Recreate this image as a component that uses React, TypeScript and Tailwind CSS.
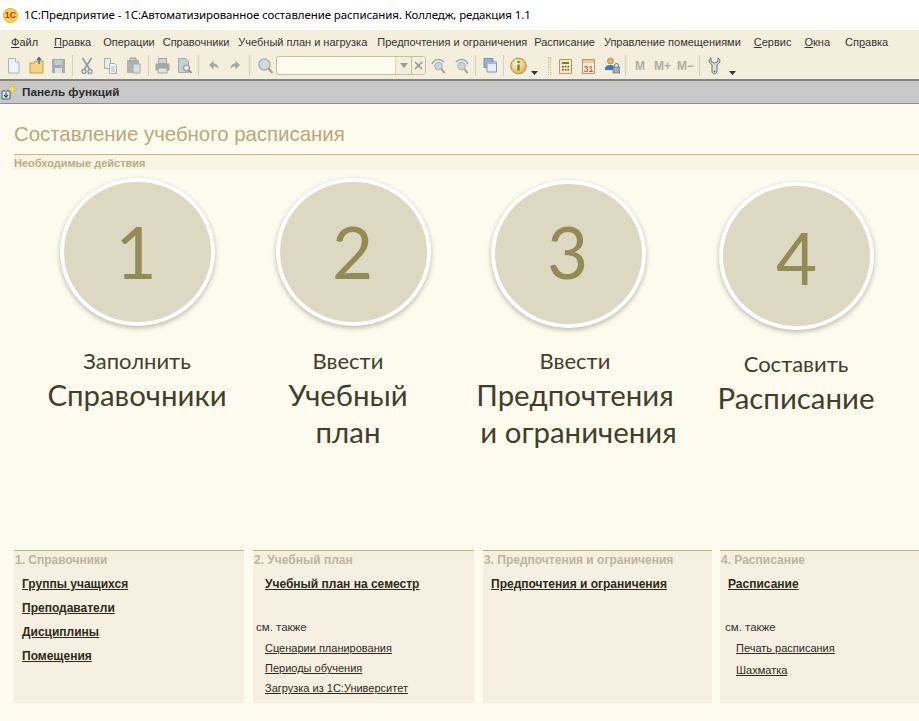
import { FC, ReactNode } from "react";

const Sep: FC<{ className?: string }> = ({ className = "" }) => (
  <div className={`w-px h-[21px] bg-[#d5cfb4] ${className}`} />
);

const Arrow: FC<{ className?: string }> = ({ className = "" }) => (
  <svg width="8" height="4" viewBox="0 0 8 4" className={`self-end mb-[2px] ${className}`}>
    <path d="M0 0h7L3.5 4z" fill="#333" />
  </svg>
);

const Ico: FC<{ w: number; h?: number; className?: string; children: ReactNode }> = ({
  w,
  h = 18,
  className = "",
  children,
}) => (
  <svg width={w} height={h} viewBox={`0 0 ${w} ${h}`} className={`shrink-0 ${className}`}>
    {children}
  </svg>
);

const Toolbar = () => (
  <div className="flex items-center h-[23px] pl-[7px]">
    {/* new */}
    <Ico w={13} className="ml-[0px]">
      <path d="M1.5 1.5h7l3.5 3.5v11h-10.5z" fill="#eef3fa" stroke="#a9b4c4" />
      <path d="M8.5 1.5v3.5h3.5" fill="#fff" stroke="#a9b4c4" />
    </Ico>
    {/* open */}
    <Ico w={16} className="ml-[9px]">
      <path d="M1 6h4l1-2h8v12H1z" fill="#f2d57d" stroke="#c2a04a" />
      <path d="M10 7V1M8 3l2-2.500L12 3" fill="none" stroke="#3f6f9c" strokeWidth="1.4" />
    </Ico>
    {/* save */}
    <Ico w={15} className="ml-[6px]">
      <path d="M1 2h13v14H1z" fill="#a4acae" />
      <path d="M3.5 3h8v5h-8z" fill="#c4cacb" />
      <path d="M4 11h7v5H4z" fill="#dfe2e2" />
    </Ico>
    <Sep className="ml-[6px]" />
    {/* cut */}
    <Ico w={12} className="ml-[8px]">
      <path d="M1.5 1l7 11M10.5 1l-7 11" stroke="#8f9aa3" strokeWidth="1.7" />
      <circle cx="3" cy="14.5" r="2" fill="none" stroke="#8f9aa3" strokeWidth="1.4" />
      <circle cx="9" cy="14.5" r="2" fill="none" stroke="#8f9aa3" strokeWidth="1.4" />
    </Ico>
    {/* copy */}
    <Ico w={15} className="ml-[10px]">
      <path d="M1.5 1.5h6v10h-6z" fill="#e9ecef" stroke="#a5adb3" />
      <path d="M6.5 6.5h5l2 2v8h-7z" fill="#f5f6f7" stroke="#a5adb3" />
      <path d="M8 10h4M8 12h4M8 14h4" stroke="#b5bbc0" />
    </Ico>
    {/* paste */}
    <Ico w={15} className="ml-[8px]">
      <path d="M1 3h12v13H1z" fill="#aeb5ad" />
      <path d="M4 1h6v3H4z" fill="#cfcfc6" stroke="#9b9f97" />
      <path d="M7 7h7v9H7z" fill="#d9dfe3" stroke="#a4acb0" />
    </Ico>
    <Sep className="ml-[7px]" />
    {/* print */}
    <Ico w={15} className="ml-[6px]">
      <path d="M3.5 1.5h8v5h-8z" fill="#d3d3ce" stroke="#a3a5a1" />
      <path d="M0.5 6.5h14v7h-14z" fill="#a4a8a6" />
      <path d="M3 11h9v5H3z" fill="#e3e3df" stroke="#a3a5a1" />
    </Ico>
    {/* preview */}
    <Ico w={15} className="ml-[7px]">
      <path d="M1.5 1.5h7l3 3v11h-10z" fill="#c9d0d4" stroke="#a5acb0" />
      <circle cx="9.5" cy="11" r="3" fill="#e6e8e4" stroke="#8f9692" strokeWidth="1.2" />
      <path d="M11.5 13l3 3" stroke="#8f8a68" strokeWidth="1.6" />
    </Ico>
    <Sep className="ml-[6px]" />
    {/* undo */}
    <Ico w={10} className="ml-[10px]">
      <path d="M0 8l4.500-4.500V6.500c3 0 5 2 5 5.500-1-2-2.500-2.500-5-2.500v3z" fill="#9fab9f" />
    </Ico>
    {/* redo */}
    <Ico w={10} className="ml-[11px]">
      <path d="M10 8L5.500 3.500V6.500c-3 0-5 2-5 5.500 1-2 2.500-2.500 5-2.500v3z" fill="#9fab9f" />
    </Ico>
    <Sep className="ml-[9px]" />
    {/* search */}
    <Ico w={15} className="ml-[8px]">
      <circle cx="6.500" cy="7.500" r="5.500" fill="#d3d8dc" stroke="#a8aeb3" strokeWidth="1.400" />
      <path d="M10.500 11.500l4 4.500" stroke="#a69f80" strokeWidth="2.200" />
    </Ico>
    {/* input */}
    <div className="ml-[3px] w-[150px] h-[19px] flex rounded-[3px] border border-[#c9c094] bg-[#fdfbee] overflow-hidden">
      <div className="flex-1" />
      <div className="w-[16px] border-l border-[#d9d3b5] bg-[#f4efdc] flex items-center justify-center">
        <svg width="8" height="5" viewBox="0 0 8 5">
          <path d="M0 0h8L4 5z" fill="#9a9a92" />
        </svg>
      </div>
      <div className="w-[14px] border-l border-[#c9c094] bg-[#f4efdc] flex items-center justify-center">
        <svg width="9" height="9" viewBox="0 0 9 9">
          <path d="M1 1l7 7M8 1L1 8" stroke="#8d9190" strokeWidth="1.300" />
        </svg>
      </div>
    </div>
    {/* search back / forward */}
    <Ico w={15} className="ml-[5px]">
      <circle cx="7.500" cy="9" r="3.800" fill="#ced4d8" stroke="#a8aeb3" />
      <path d="M10.500 12l3 4" stroke="#a69f80" strokeWidth="2" />
      <path d="M1 7c2-5 8-6 12-2" fill="none" stroke="#8ea7b4" strokeWidth="1.500" />
    </Ico>
    <Ico w={15} className="ml-[8px]">
      <circle cx="7.500" cy="9" r="3.800" fill="#ced4d8" stroke="#a8aeb3" />
      <path d="M10.500 12l3 4" stroke="#a69f80" strokeWidth="2" />
      <path d="M14 7C12 2 6 1 2 5" fill="none" stroke="#8ea7b4" strokeWidth="1.500" />
    </Ico>
    <Sep className="ml-[6px]" />
    {/* windows */}
    <Ico w={15} className="ml-[7px]">
      <path d="M1 1.500h9v9H1z" fill="#9db4cf" stroke="#7890ae" />
      <path d="M4 5h9.500v10H4z" fill="#e6edf4" stroke="#7d97b6" />
      <path d="M4 5h9.500v2H4z" fill="#a5bbd3" />
    </Ico>
    <Sep className="ml-[5px]" />
    {/* info */}
    <svg width="17" height="18" viewBox="0 0 17 18" className="shrink-0 ml-[6px]">
      <defs>
        <radialGradient id="inf" cx="40%" cy="35%" r="70%">
          <stop offset="0%" stopColor="#fff6d8" />
          <stop offset="100%" stopColor="#e9a94b" />
        </radialGradient>
      </defs>
      <circle cx="8.500" cy="9" r="7.800" fill="url(#inf)" stroke="#b98a4a" />
      <circle cx="8.500" cy="5" r="1.300" fill="#5c8a2e" />
      <path d="M8.500 7.500v6" stroke="#5c8a2e" strokeWidth="2.400" />
    </svg>
    <Arrow className="ml-[4px]" />
    <div className="ml-[9px] h-[18px] w-[3px] border-x border-dotted border-[#c9c094]" />
    {/* calc */}
    <Ico w={13} className="ml-[8px]">
      <path d="M.5 2.500h12v14H.5z" fill="#f6e6c4" stroke="#c98f62" />
      <path d="M3 5h7v2H3z" fill="#5f8a3a" />
      <path d="M3 9h2v1.500H3zM6 9h1.500v1.500H6zM8.500 9H10v1.500H8.500zM3 12h2v1.500H3zM6 12h1.500v1.500H6zM8.500 12H10v1.500H8.500z" fill="#6b5a3c" />
    </Ico>
    {/* calendar */}
    <svg width="13" height="18" viewBox="0 0 13 18" className="shrink-0 ml-[10px]">
      <path d="M.5 2.500h12v14H.5z" fill="#fbf3df" stroke="#c98f62" />
      <path d="M1 3h11v3H1z" fill="#efc78e" />
      <text x="6.500" y="15" textAnchor="middle" fontSize="9" fontFamily="Liberation Sans, sans-serif" fill="#d8301c">
        31
      </text>
    </svg>
    {/* users */}
    <Ico w={15} className="ml-[10px]">
      <circle cx="5.500" cy="4" r="3" fill="#e9b25e" stroke="#a8742c" strokeWidth=".6" />
      <path d="M0 13c0-4 2-5 5.500-5S9 9 9 13z" fill="#3f76c4" />
      <path d="M8 10h7v6H8z" fill="#9db0bd" stroke="#60707c" strokeWidth=".7" />
      <path d="M9.500 10V8.500a2 2 0 0 1 4 0V10" fill="none" stroke="#60707c" />
    </Ico>
    <Sep className="ml-[5px]" />
    <span className="ml-[9px] w-[12px] text-[12px] font-bold text-[#b1ae9f]">M</span>
    <span className="ml-[7px] w-[17px] text-[12px] font-bold text-[#b1ae9f]">M+</span>
    <span className="ml-[6px] w-[17px] text-[12px] font-bold text-[#b1ae9f]">M−</span>
    <Sep className="ml-[5px]" />
    {/* wrench */}
    <Ico w={13} className="ml-[8px]">
      <path
        d="M3 .8v3.700l3.500 1.500L10 4.500V.8c2.500 1.500 3 5.200-1 6.700v7c0 3-5 3-5 0v-7C0 6 .5 2.300 3 .8z"
        fill="#dcdeda"
        stroke="#6f736d"
      />
      <circle cx="6.500" cy="14.500" r="1" fill="#6f736d" />
    </Ico>
    <Arrow className="ml-[8px]" />
  </div>
);

const menu = [
  { ml: "ml-[11px]", pre: "", u: "Ф", post: "айл" },
  { ml: "ml-[16px]", pre: "", u: "П", post: "равка" },
  { ml: "ml-[12px]", pre: "Операции" },
  { ml: "ml-[8px]", pre: "Справочники" },
  { ml: "ml-[9px]", pre: "Учебный план и нагрузка" },
  { ml: "ml-[10px]", pre: "Предпочтения и ограничения" },
  { ml: "ml-[7px]", pre: "Расписание" },
  { ml: "ml-[9px]", pre: "Управление помещениями" },
  { ml: "ml-[13px]", pre: "", u: "С", post: "ервис" },
  { ml: "ml-[13px]", pre: "", u: "О", post: "кна" },
  { ml: "ml-[15px]", pre: "Сп", u: "р", post: "авка" },
];

const Menu = () => (
  <div className="flex items-center h-[24px] text-[11px] text-[#333] whitespace-nowrap">
    {menu.map((m) => (
      <span key={m.pre + (m.u || "") + (m.post || "")} className={m.ml}>
        {m.pre}
        {m.u && <span className="underline">{m.u}</span>}
        {m.post}
      </span>
    ))}
  </div>
);

const Circle: FC<{ n: string; className?: string; numClass?: string }> = ({ n, className = "", numClass = "" }) => (
  <div
    className={`w-[155px] h-[148px] shrink-0 rounded-[50%] bg-[#dcd8c2] border-[4px] border-white shadow-[0_2px_5px_rgba(90,85,60,0.4)] flex items-center justify-center text-[71px] text-[#938a54] font-['Lato',sans-serif] ${className}`}
  >
    <span className={numClass}>{n}</span>
  </div>
);

const Caption: FC<{
  top: string;
  lines: string[];
  className?: string;
  lastClass?: string;
  pushTop?: string;
}> = ({ top, lines, className = "", lastClass = "", pushTop = "mt-[1px]" }) => (
  <div className={`flex flex-col items-center shrink-0 text-[#3f3f2c] font-['Lato',sans-serif] ${className}`}>
    <div className={`text-[22px] leading-[26px] ${pushTop}`}>{top}</div>
    <div className="text-[29.4px] leading-[37px] mt-[2px] text-center">
      {lines.map((l, i) => (
        <div key={l} className={i > 0 ? lastClass : ""}>
          {l}
        </div>
      ))}
    </div>
  </div>
);

const Bold: FC<{ children: ReactNode }> = ({ children }) => (
  <a className="block w-max text-[12px] leading-[14px] font-bold text-[#2e2a18] underline">{children}</a>
);

const Thin: FC<{ children: ReactNode }> = ({ children }) => (
  <a className="block w-max text-[11px] leading-[13px] text-[#2e2a18] underline">{children}</a>
);

const Panel: FC<{ title: string; className: string; children: ReactNode }> = ({ title, className, children }) => (
  <div className={`h-[153px] shrink-0 border-t border-[#b6b48c] bg-[#f6f0e3] ${className}`}>
    <div className="h-[18px] flex items-center pl-[1px] text-[12px] font-bold text-[#bdb59c] bg-gradient-to-b from-[#f3f0de] to-[#f6f0e3]">
      {title}
    </div>
    {children}
  </div>
);

export default function App() {
  return (
    <div className="w-[919px] h-[721px] overflow-hidden bg-[#fdfbee] flex flex-col font-['Liberation_Sans',sans-serif]">
      {/* title bar */}
      <div className="h-[30px] bg-white flex items-center pl-[3px] shrink-0">
        <div className="w-[15px] h-[15px] rounded-full bg-[#fcd64a] border border-[#e0a92c] flex items-center justify-center text-[9px] font-bold text-[#d9271c] leading-none">
          1С
        </div>
        <span className="ml-[6px] text-[11.5px] text-black font-['Noto_Sans',sans-serif] whitespace-nowrap tracking-[-0.1px]">
          1С:Предприятие - 1С:Автоматизированное составление расписания. Колледж, редакция 1.1
        </span>
      </div>

      {/* menu and toolbar */}
      <div className="h-[49px] bg-[#f4efdc] shrink-0">
        <Menu />
        <Toolbar />
      </div>

      {/* function panel */}
      <div className="h-[25px] shrink-0 bg-[#c8c8c8] border-t-2 border-b border-t-[#86867e] border-b-[#8f8f87] flex items-center pl-[1px]">
        <svg width="16" height="16" viewBox="0 0 16 16" className="shrink-0">
          <path d="M1 7h8v8H1z" fill="#dfe8f0" stroke="#40628a" />
          <path d="M5 8.500v4.500M3 11l2 2.500L7 11" fill="none" stroke="#222" />
          <path d="M11 0l1.400 3.600L16 5l-3.600 1.400L11 10 9.600 6.400 6 5l3.600-1.400z" fill="#fbe25c" stroke="#d4a72c" strokeWidth=".5" />
        </svg>
        <span className="ml-[5px] text-[11.7px] font-bold text-[#2b2b2b]">Панель функций</span>
      </div>

      {/* page */}
      <div className="flex-1 pl-[14px] pt-[18px] flex flex-col">
        <h1 className="text-[20.4px] leading-[24px] text-[#b7a97a] h-[32px]">
          Составление учебного расписания
        </h1>
        <div className="h-[16px] pt-[2px] border-t border-[#c4b888] bg-[#f7f4e2] flex items-center text-[11px] font-bold text-[#b8ae82]">
          Необходимые действия
        </div>

        <div className="flex items-start ml-[46px]">
          <Circle n="1" className="mt-[8px]" numClass="mr-[3px]" />
          <Circle n="2" className="mt-[8px] ml-[61px]" numClass="mr-[2px]" />
          <Circle n="3" className="mt-[10px] ml-[60px]" numClass="mb-[4px] mr-[2px]" />
          <Circle n="4" className="mt-[12px] ml-[73px]" numClass="mt-[4px]" />
        </div>

        <div className="flex items-start mt-[17px]">
          <Caption top="Заполнить" lines={["Справочники"]} className="w-[246px]" />
          <Caption top="Ввести" lines={["Учебный", "план"]} className="w-[176px]" />
          <Caption
            top="Ввести"
            lines={["Предпочтения", "и ограничения"]}
            className="w-[220px] ml-[29px]"
            lastClass="pl-[7px]"
          />
          <Caption
            top="Составить"
            lines={["Расписание"]}
            className="w-[180px] ml-[21px] mt-[3px]"
            pushTop="mt-[1px]"
          />
        </div>

        <div className="flex-1" />

        <div className="flex mb-[18px]">
          <Panel title="1. Справочники" className="w-[230px]">
            <div className="pl-[8px] pt-[8px] flex flex-col gap-[10px]">
              <Bold>Группы учащихся</Bold>
              <Bold>Преподаватели</Bold>
              <Bold>Дисциплины</Bold>
              <Bold>Помещения</Bold>
            </div>
          </Panel>
          <Panel title="2. Учебный план" className="w-[221px] ml-[9px]">
            <div className="pl-[12px] pt-[8px]">
              <Bold>Учебный план на семестр</Bold>
            </div>
            <div className="pl-[3px] mt-[30px] text-[11.5px] leading-[13px] text-[#333]">см. также</div>
            <div className="pl-[12px] mt-[8px] flex flex-col gap-[7px]">
              <Thin>Сценарии планирования</Thin>
              <Thin>Периоды обучения</Thin>
              <Thin>Загрузка из 1С:Университет</Thin>
            </div>
          </Panel>
          <Panel title="3. Предпочтения и ограничения" className="w-[229px] ml-[9px]">
            <div className="pl-[8px] pt-[8px]">
              <Bold>Предпочтения и ограничения</Bold>
            </div>
          </Panel>
          <Panel title="4. Расписание" className="w-[199px] ml-[8px]">
            <div className="pl-[8px] pt-[8px]">
              <Bold>Расписание</Bold>
            </div>
            <div className="pl-[5px] mt-[30px] text-[11.5px] leading-[13px] text-[#333]">см. также</div>
            <div className="pl-[16px] mt-[8px] flex flex-col gap-[9px]">
              <Thin>Печать расписания</Thin>
              <Thin>Шахматка</Thin>
            </div>
          </Panel>
        </div>
      </div>
    </div>
  );
}
